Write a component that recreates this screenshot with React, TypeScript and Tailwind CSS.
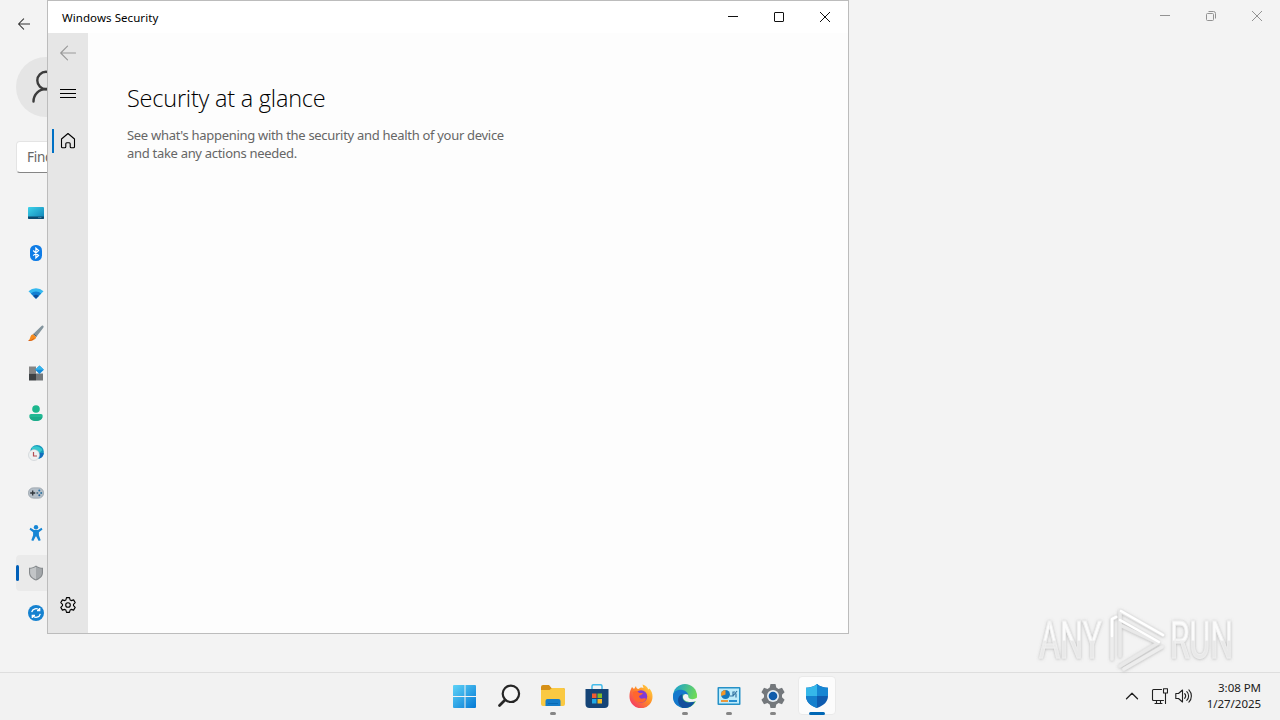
import React from "react";

const stroke = { fill: "none", strokeLinecap: "round" as const, strokeLinejoin: "round" as const };

function BackArrow({ size, color, weight }: { size: number; color: string; weight: number }) {
  return (
    <svg width={size} height={size} viewBox="0 0 16 16" {...stroke} stroke={color} strokeWidth={weight}>
      <path d="M15.500 8H.7M7.500 1.200.7 8l6.800 6.800" />
    </svg>
  );
}

const navIcons: React.ReactNode[] = [
  <>
    <defs><linearGradient id="sys" x1="0" y1="0" x2="1" y2="1"><stop stopColor="#3cd3ea" /><stop offset="1" stopColor="#0f7fb4" /></linearGradient></defs>
    <rect x="0" y="2" width="16" height="12" rx="1" fill="url(#sys)" />
    <path d="M0 11.500h16V13a1 1 0 0 1-1 1H1a1 1 0 0 1-1-1z" fill="#0d4a70" />
    <path d="M10.500 12.600h1M12.300 12.600h1" stroke="#7fc2dd" strokeWidth=".8" />
  </>,
  <>
    <rect x="2" y="0" width="12" height="16" rx="5.500" fill="#0f7ce6" />
    <path d="m5.200 5.500 5.400 5-2.700 2.400V3.200l2.700 2.400-5.400 5" fill="none" stroke="#fff" strokeWidth="1.200" />
  </>,
  <>
    <path d="M.5 6.200a11.200 11.200 0 0 1 15 0L8 13.800z" fill="#35b8ef" />
    <path d="M2.800 8.500a7.500 7.500 0 0 1 10.400 0L8 13.800z" fill="#117fd2" />
    <path d="M5.200 11a4 4 0 0 1 5.600 0L8 13.800z" fill="#0c4d9c" />
  </>,
  <>
    <path d="M14.800.5c1 .4 1.100 1.300.5 2.200L9 11 6 8.200 13.500.9c.4-.4.800-.6 1.300-.4z" fill="#83949d" />
    <path d="m6 8.200 3 2.800-.8 1L5 9.200z" fill="#52646e" />
    <path d="M5 9.200 8.200 12c-.4 3-4.500 4-7.700 3.600C2.700 14 1.700 10 5 9.200z" fill="#f58b20" />
    <path d="M.5 15.600c2.500.1 4.400-.6 5.300-2.200" fill="none" stroke="#d55d13" />
  </>,
  <>
    <rect x="1" y="1.500" width="7" height="7" fill="#858585" />
    <rect x="1" y="8.500" width="7" height="7" fill="#3d4144" />
    <rect x="8" y="8.500" width="7" height="7" fill="#74787b" />
    <path d="m11.500.6 4.400 4.200L11.500 9 7.100 4.800z" fill="#138bdc" />
    <path d="m11.500.6 4.400 4.200H7.100z" fill="#35b5ec" />
  </>,
  <>
    <circle cx="8" cy="4" r="3.800" fill="#1cb78d" />
    <path d="M3 9h10a1.700 1.700 0 0 1 1.700 1.700C14.700 14.300 12 16 8 16s-6.700-1.700-6.700-5.300A1.700 1.700 0 0 1 3 9z" fill="#22b893" />
    <path d="M1.500 12c.6 2.800 3 4 6.500 4s5.900-1.200 6.500-4z" fill="#169b7f" opacity=".45" />
  </>,
  <>
    <circle cx="9" cy="7" r="6.900" fill="#1599bc" />
    <path d="M4 2.200C8 .5 12 1 14.500 5L11 8 4 5z" fill="#36c8ce" />
    <path d="M11 8h4.800c-.3 3-2 5-4.800 5.600z" fill="#126ebd" />
    <circle cx="6" cy="10" r="5.500" fill="#eef0f1" stroke="#bcc5c9" strokeWidth=".5" />
    <path d="M5.500 7v4H9" fill="none" stroke="#b44d52" strokeWidth="1.200" />
  </>,
  <>
    <rect x=".4" y="2.800" width="15.200" height="10.400" rx="5" fill="#b5bfc8" stroke="#8c969e" strokeWidth=".6" />
    <path d="M2.200 8h5M4.700 5.500v5" stroke="#30363b" strokeWidth="1.300" />
    <circle cx="11.300" cy="5.600" r="1" fill="#2670aa" /><circle cx="13.200" cy="8" r="1" fill="#31739d" />
    <circle cx="11.300" cy="10.300" r="1" fill="#255f96" /><circle cx="9.300" cy="8" r="1" fill="#51758c" />
  </>,
  <>
    <circle cx="8" cy="2.200" r="2.200" fill="#1686d5" />
    <path d="M2.500 2.800 6 5h4l3.500-2.200 1 1.700-3.600 2.800v2.900l1.800 5-2 .8L8.300 11.500h-.6L5.300 16l-2-.8 1.800-5V7.300L1.500 4.500z" fill="#1686d5" />
  </>,
  <>
    <path d="M8 .5c2 1.700 4.300 2.300 7 2.300v4.700c0 4-3 6.500-7 8-4-1.500-7-4-7-8V2.800C3.700 2.800 6 2.200 8 .5z" fill="#85898c" />
    <path d="M8 1.800c1.800 1.200 3.700 1.800 5.900 1.900v3.800c0 3.400-2.500 5.500-5.900 6.900z" fill="#a3a7aa" />
    <path d="M8 1.800C6.200 3 4.300 3.600 2.100 3.700v3.800c0 3.400 2.500 5.500 5.900 6.900z" fill="#c2c5c7" />
  </>,
  <>
    <circle cx="8" cy="8" r="8" fill="#1682d0" />
    <path d="M3.700 7.200c.8-3.700 5.400-4.700 7.700-1.800M12.300 8.800c-.8 3.700-5.400 4.700-7.700 1.800M11.700 3v2.700H9M4.300 13v-2.700H7" fill="none" stroke="#fff" strokeWidth="1.300" />
  </>,
];

function Settings() {
  return (
    <div className="flex h-[672px] justify-between">
      <aside className="flex w-[320px] flex-col pl-4">
        <div className="flex h-12 items-center pl-0.5"><BackArrow size={12} color="#333" weight={1.4} /></div>
        <div className="mt-[9px] flex size-[60px] items-center justify-center rounded-full bg-[#e5e5e5]">
          <svg width="30" height="34" viewBox="0 0 30 34" {...stroke} stroke="#3c3c3c" strokeWidth="2.400">
            <circle cx="15" cy="10.500" r="8.700" /><path d="M2.500 31.500a12.500 12.500 0 0 1 25 0" />
          </svg>
        </div>
        <div className="mt-6 flex h-8 items-center rounded border border-[#e4e4e4] border-b-[#858585] bg-white pl-2.5 text-[13.5px] tracking-[-0.3px] text-[#666]">Find a setting</div>
        <nav className="mt-[22px] flex flex-col gap-1">
          {navIcons.map((icon, i) => (
            <div key={i} className={i === 9 ? "flex h-9 items-center rounded bg-[#eaeaea]" : "flex h-9 items-center"}>
              <span className={i === 9 ? "mr-[9px] h-4 w-[3px] rounded-full bg-[#005fb8]" : "mr-[9px] h-4 w-[3px]"} />
              <svg width="16" height="16" viewBox="0 0 16 16">{icon}</svg>
            </div>
          ))}
        </nav>
      </aside>
      <div className="flex h-8 items-center">
        <span className="flex w-[46px] justify-center"><svg width="10" height="10" stroke="#929292"><path d="M0 4.500h10" /></svg></span>
        <span className="flex w-[46px] justify-center"><svg width="10" height="10" fill="none" stroke="#929292"><rect x=".5" y="2.500" width="7" height="7" rx="1" /><path d="M2.500.5h5a2 2 0 0 1 2 2v5" /></svg></span>
        <span className="flex w-[46px] justify-center"><svg width="10" height="10" stroke="#929292"><path d="m0 0 10 10M10 0 0 10" /></svg></span>
      </div>
    </div>
  );
}

function SecurityWindow() {
  return (
    <div className="absolute left-[47px] top-0 flex h-[634px] w-[802px] flex-col border border-[#bcbcbc] bg-[#fdfdfd]">
      <header className="flex h-8 shrink-0 items-center justify-between bg-white pl-3.5">
        <span className="pt-px text-[11.5px] tracking-[0.07px] text-black">Windows Security</span>
        <div className="flex">
          <span className="flex w-[46px] justify-center"><svg width="10" height="10" stroke="#111"><path d="M0 4.500h10" /></svg></span>
          <span className="flex w-[46px] justify-center"><svg width="10" height="10" fill="none" stroke="#111"><rect x=".5" y=".5" width="9" height="9" rx=".5" /></svg></span>
          <span className="flex w-[46px] justify-center"><svg width="10" height="10" stroke="#111"><path d="m0 0 10 10M10 0 0 10" /></svg></span>
        </div>
      </header>
      <div className="flex flex-1">
        <aside className="flex w-10 flex-col bg-[#e6e6e6]">
          <div className="flex h-10 items-center justify-center"><BackArrow size={16} color="#999" weight={1.1} /></div>
          <div className="flex h-10 items-center justify-center">
            <svg width="16" height="10" stroke="#000"><path d="M0 1.500h16M0 5.500h16M0 9.500h16" /></svg>
          </div>
          <div className="mt-2 flex h-10 items-center pl-1">
            <span className="h-6 w-0.5 bg-[#0071c5]" />
            <svg className="ml-[6px]" width="16" height="16" viewBox="0 0 16 16" {...stroke} stroke="#000" strokeWidth="1.100">
              <path d="M1.500 6 8 .5 14.500 6v7.700a1 1 0 0 1-1 1h-2.300a1 1 0 0 1-1-1v-2.900a1 1 0 0 0-1-1H6.800a1 1 0 0 0-1 1v2.900a1 1 0 0 1-1 1H2.500a1 1 0 0 1-1-1z" />
            </svg>
          </div>
          <div className="mb-2 mt-auto flex h-10 items-center justify-center">
            <svg width="16" height="16" viewBox="0 0 16 16" {...stroke} stroke="#000" strokeWidth="1.100">
              <path d="M6.500.6h3l.6 2.300 1.200.7 2.300-.7 1.600 2.700L13.500 7.300v1.400l1.700 1.700-1.600 2.700-2.300-.7-1.200.7-.6 2.300h-3l-.6-2.300-1.200-.7-2.300.7L.8 10.400l1.700-1.700V7.300L.8 5.600l1.600-2.700 2.300.7 1.200-.7z" />
              <circle cx="8" cy="8" r="2.300" />
            </svg>
          </div>
        </aside>
        <main className="pl-[39px] pt-[49px]">
          <h1 className="font-['Open_Sans','Noto_Sans',sans-serif] text-[23.5px] font-[340] leading-8 tracking-[-0.22px] text-black">Security at a glance</h1>
          <p className="mt-3 w-[400px] text-[13px] leading-[18px] tracking-[-0.3px] text-[#666]">See what's happening with the security and health of your device<br />and take any actions needed.</p>
        </main>
      </div>
    </div>
  );
}

const apps: { icon: React.ReactNode; open?: boolean; active?: boolean }[] = [
  { icon: <>
    <defs><linearGradient id="win" x1="0" y1="0" x2="1" y2="1"><stop stopColor="#5fd3f7" /><stop offset="1" stopColor="#0479d5" /></linearGradient></defs>
    <path d="M1 1h10.500v11H0V2a1 1 0 0 1 1-1zM12.500 1H22a1 1 0 0 1 1 1v10H12.500zM0 13h11.500v11H1a1 1 0 0 1-1-1zM12.500 13H23v10a1 1 0 0 1-1 1h-9.500z" fill="url(#win)" />
  </> },
  { icon: <><circle cx="13.900" cy="9.800" r="8.200" fill="#f6f6f6" stroke="#262626" strokeWidth="2.200" /><path d="m8 16-5.500 5.500" stroke="#262626" strokeWidth="2.800" strokeLinecap="round" /></> },
  { open: true, icon: <>
    <path d="M0 3a2 2 0 0 1 2-2h6l2.500 3H22a2 2 0 0 1 2 2v5H0z" fill="#d69017" />
    <path d="M0 6h8.500L11 4h11a2 2 0 0 1 2 2v14a2 2 0 0 1-2 2H2a2 2 0 0 1-2-2z" fill="#fac942" />
    <path d="M4.500 22v-5a2 2 0 0 1 2-2h11a2 2 0 0 1 2 2v5z" fill="#147cc9" /><path d="M7 19.500h10" stroke="#0869b3" />
  </> },
  { icon: <>
    <path d="M7 6V2.200A1.500 1.500 0 0 1 8.500.7h7A1.500 1.500 0 0 1 17 2.200V6" fill="none" stroke="#45bbea" strokeWidth="1.500" />
    <path d="M.5 5h23v15a4 4 0 0 1-4 4h-15a4 4 0 0 1-4-4z" fill="#154477" />
    <path d="M7 9.500h4.500V14H7z" fill="#f15c32" /><path d="M12.500 9.500H17V14h-4.500z" fill="#80bd2b" /><path d="M7 15h4.500v4.500H7z" fill="#20a9e5" /><path d="M12.500 15H17v4.500h-4.500z" fill="#f9b821" />
  </> },
  { icon: <>
    <defs><linearGradient id="fox" x1="1" y1="0" x2="0" y2="1"><stop stopColor="#ffe34b" /><stop offset=".45" stopColor="#ff8b26" /><stop offset="1" stopColor="#f12674" /></linearGradient></defs>
    <path d="M2 5 3 3l2 2 2-3c.2 2 1 3 2.500 3 1.200-1.500 3.500-2 5-1L13.500.5c4 1 5.200 3.500 6 5l1-1c2 2.500 3 5 3 8A11.500 11.500 0 0 1 .5 13C.4 10 1 7 2 5z" fill="url(#fox)" />
    <circle cx="12" cy="12.500" r="6.200" fill="#803bd2" />
    <path d="M4 8c3-2 5-1 6 1h4c-1 2-3 2-4 3 0 2 2 3 4 2.500 2-.3 3-.2 3 .5-1 3-4 4-7 3.500-4-1-6-4-6-10.500z" fill="#ff662e" />
  </> },
  { open: true, icon: <>
    <defs><linearGradient id="edge" x1="0" y1="0" x2="1" y2=".4"><stop stopColor="#159cda" /><stop offset="1" stopColor="#70db55" /></linearGradient></defs>
    <circle cx="12" cy="12" r="12" fill="url(#edge)" />
    <path d="M0 12C.5 7 5 5 9.500 6c4.500 1 6.500 4 5.500 7l-2-2c-3-2-5 0-5 3 0 4 6 6.500 14 3-2 4.500-5.500 7-10 7C5 24-.5 19 0 12z" fill="#1478cd" />
    <path d="M9.500 10c-6 2-6 10 0 14 6 .5 10-2 12.500-6.500-6 2.500-12.500.5-12.500-4.500z" fill="#124f9c" />
    <path d="M12.500 10c-3 .7-3.500 4-.5 6.500 4 2.300 8 1.500 12 .2l.5-3.200c-3 2.500-9.500 2.300-9.200-1.300.2-1-.8-2.200-2.800-2.200z" fill="#f3f3f3" />
  </> },
  { open: true, icon: <>
    <rect x=".5" y="3" width="23" height="18" rx="1" fill="#2691c7" /><rect x="2" y="4.500" width="20" height="15" fill="#bdebfa" />
    <circle cx="8.500" cy="10.500" r="4.500" fill="#1377bf" /><path d="M8.500 10.500V6a4.500 4.500 0 0 0-4.300 5.900z" fill="#f49628" />
    <path d="M13 12h3V8h2m-2 4 4-5M19 9.500v4" fill="none" stroke="#3474a2" strokeWidth="1.200" />
    <path d="M4 17h7" stroke="#ef8e25" strokeWidth="1.800" /><path d="M12 17h8" stroke="#1684cb" strokeWidth="1.800" />
  </> },
  { open: true, icon: <>
    <path d="M9.500 0h5l.8 3.600 2.200 1.300 3.500-1.100 2.600 4.400L21 10.700v2.600l2.600 2.500-2.600 4.400-3.500-1.100-2.200 1.300-.8 3.600h-5l-.8-3.600-2.200-1.300L3 20.200.4 15.800 3 13.300v-2.600L.4 8.200 3 3.800l3.500 1.100 2.200-1.300z" fill="#74787c" />
    <circle cx="12" cy="12" r="6" fill="#e7edf2" /><circle cx="12" cy="12" r="4.300" fill="#105cab" />
  </> },
  { open: true, active: true, icon: <>
    <path d="M12 0c3 2.500 6.800 3.800 11 3.800v8c0 6-4 9.700-11 12.200C5 21.500 1 17.800 1 11.800v-8C5.200 3.800 9 2.500 12 0z" fill="#0f5cb0" />
    <path d="M12 0v12H1V3.800C5.200 3.800 9 2.500 12 0z" fill="#35b7e9" /><path d="M12 0v12h11V3.800C18.800 3.800 15 2.500 12 0z" fill="#1686d3" /><path d="M1 12h11v12C5 21.500 1 17.800 1 12z" fill="#1580cd" />
  </> },
];

function Taskbar() {
  return (
    <footer className="flex h-12 items-start border-t border-[#dedede] bg-[#f2f2f2] pl-[443px]">
      {apps.map(({ icon, open, active }, i) => (
        <div key={i} className="flex h-[45px] w-11 items-center justify-center">
          <div className={active ? "flex h-[39px] w-[38px] flex-col items-center rounded border border-[#eaeaea] bg-[#fcfcfc] pt-[7px]" : "flex h-[39px] w-[38px] flex-col items-center pt-2"}>
            <svg className="shrink-0" width="24" height="24" viewBox="0 0 24 24">{icon}</svg>
            {open && <span className={active ? "mt-1 h-[3px] w-4 shrink-0 rounded-full bg-[#0067b5]" : "mt-1 h-[3px] w-1.5 shrink-0 rounded-full bg-[#858585]"} />}
          </div>
        </div>
      ))}
      <div className="ml-auto mr-[19px] flex h-[46px] items-center">
        <svg width="14" height="14" viewBox="0 0 14 14" {...stroke} stroke="#202020" strokeWidth="1.300"><path d="m1.500 9.800 5.500-5.500 5.500 5.500" /></svg>
        <svg className="ml-3" width="17" height="17" viewBox="0 0 17 17" {...stroke} stroke="#202020" strokeWidth="1.100">
          <path d="M10.500 1.500h-8a1 1 0 0 0-1 1v9a1 1 0 0 0 1 1h10M4 15.500h7M5.500 13v2.500M9.500 13v2.500M12.500.8h4v4.200h-4zM14.500 5v10.500" />
        </svg>
        <svg className="ml-[7px]" width="17" height="16" viewBox="0 0 17 16" {...stroke} stroke="#202020" strokeWidth="1.100">
          <path d="M.8 5.500h2.700L7.500 2v12l-4-3.500H.8zM9.700 5.700a3.500 3.500 0 0 1 0 4.600M11.800 3.700a6 6 0 0 1 0 8.600M13.900 1.800a9 9 0 0 1 0 12.400" />
        </svg>
        <div className="ml-[13px] w-[56px] whitespace-nowrap text-right text-[11.5px] leading-4 tracking-[-0.04px] text-[#202020]"><div>3:08 PM</div><div>1/27/2025</div></div>
      </div>
    </footer>
  );
}

function Watermark() {
  return (
    <svg className="absolute left-[1020px] top-[598px]" width="260" height="82" viewBox="-10 -4 260 82">
      <defs>
        <linearGradient id="wm" gradientUnits="userSpaceOnUse" x1="0" y1="16" x2="0" y2="58"><stop offset=".52" stopColor="#fbfbfb" /><stop offset=".56" stopColor="#e9e9e9" /></linearGradient>
        <filter id="wms" x="-20%" y="-20%" width="140%" height="140%"><feDropShadow dx="0" dy=".5" stdDeviation="1.600" floodColor="#777" floodOpacity=".5" /></filter>
      </defs>
      <g filter="url(#wms)" fontFamily="'Roboto',sans-serif" fontSize="51" fontWeight="400" fill="url(#wm)" stroke="#efefef" strokeWidth="1">
        <text x="9" y="56" textLength="63" lengthAdjust="spacingAndGlyphs">ANY</text>
        <text x="140" y="56" textLength="63" lengthAdjust="spacingAndGlyphs">RUN</text>
      </g>
      <g filter="url(#wms)" {...stroke} strokeWidth="3.500">
        <path d="M82 57V17l4-2M94 67l38-22" stroke="#ededed" />
        <path d="M90 54V9l43 24M92 24l36 17-38 23" stroke="#e9e9e9" />
        <path d="M82 34V17l4-2M90 18l39 22M91 9l42 24" stroke="#fff" strokeWidth="2.500" />
      </g>
    </svg>
  );
}

export default function App() {
  return (
    <div className="relative h-[720px] w-[1280px] overflow-hidden bg-[#f3f3f3] font-['Noto_Sans','Open_Sans',sans-serif]">
      <Settings />
      <Taskbar />
      <SecurityWindow />
      <Watermark />
    </div>
  );
}
